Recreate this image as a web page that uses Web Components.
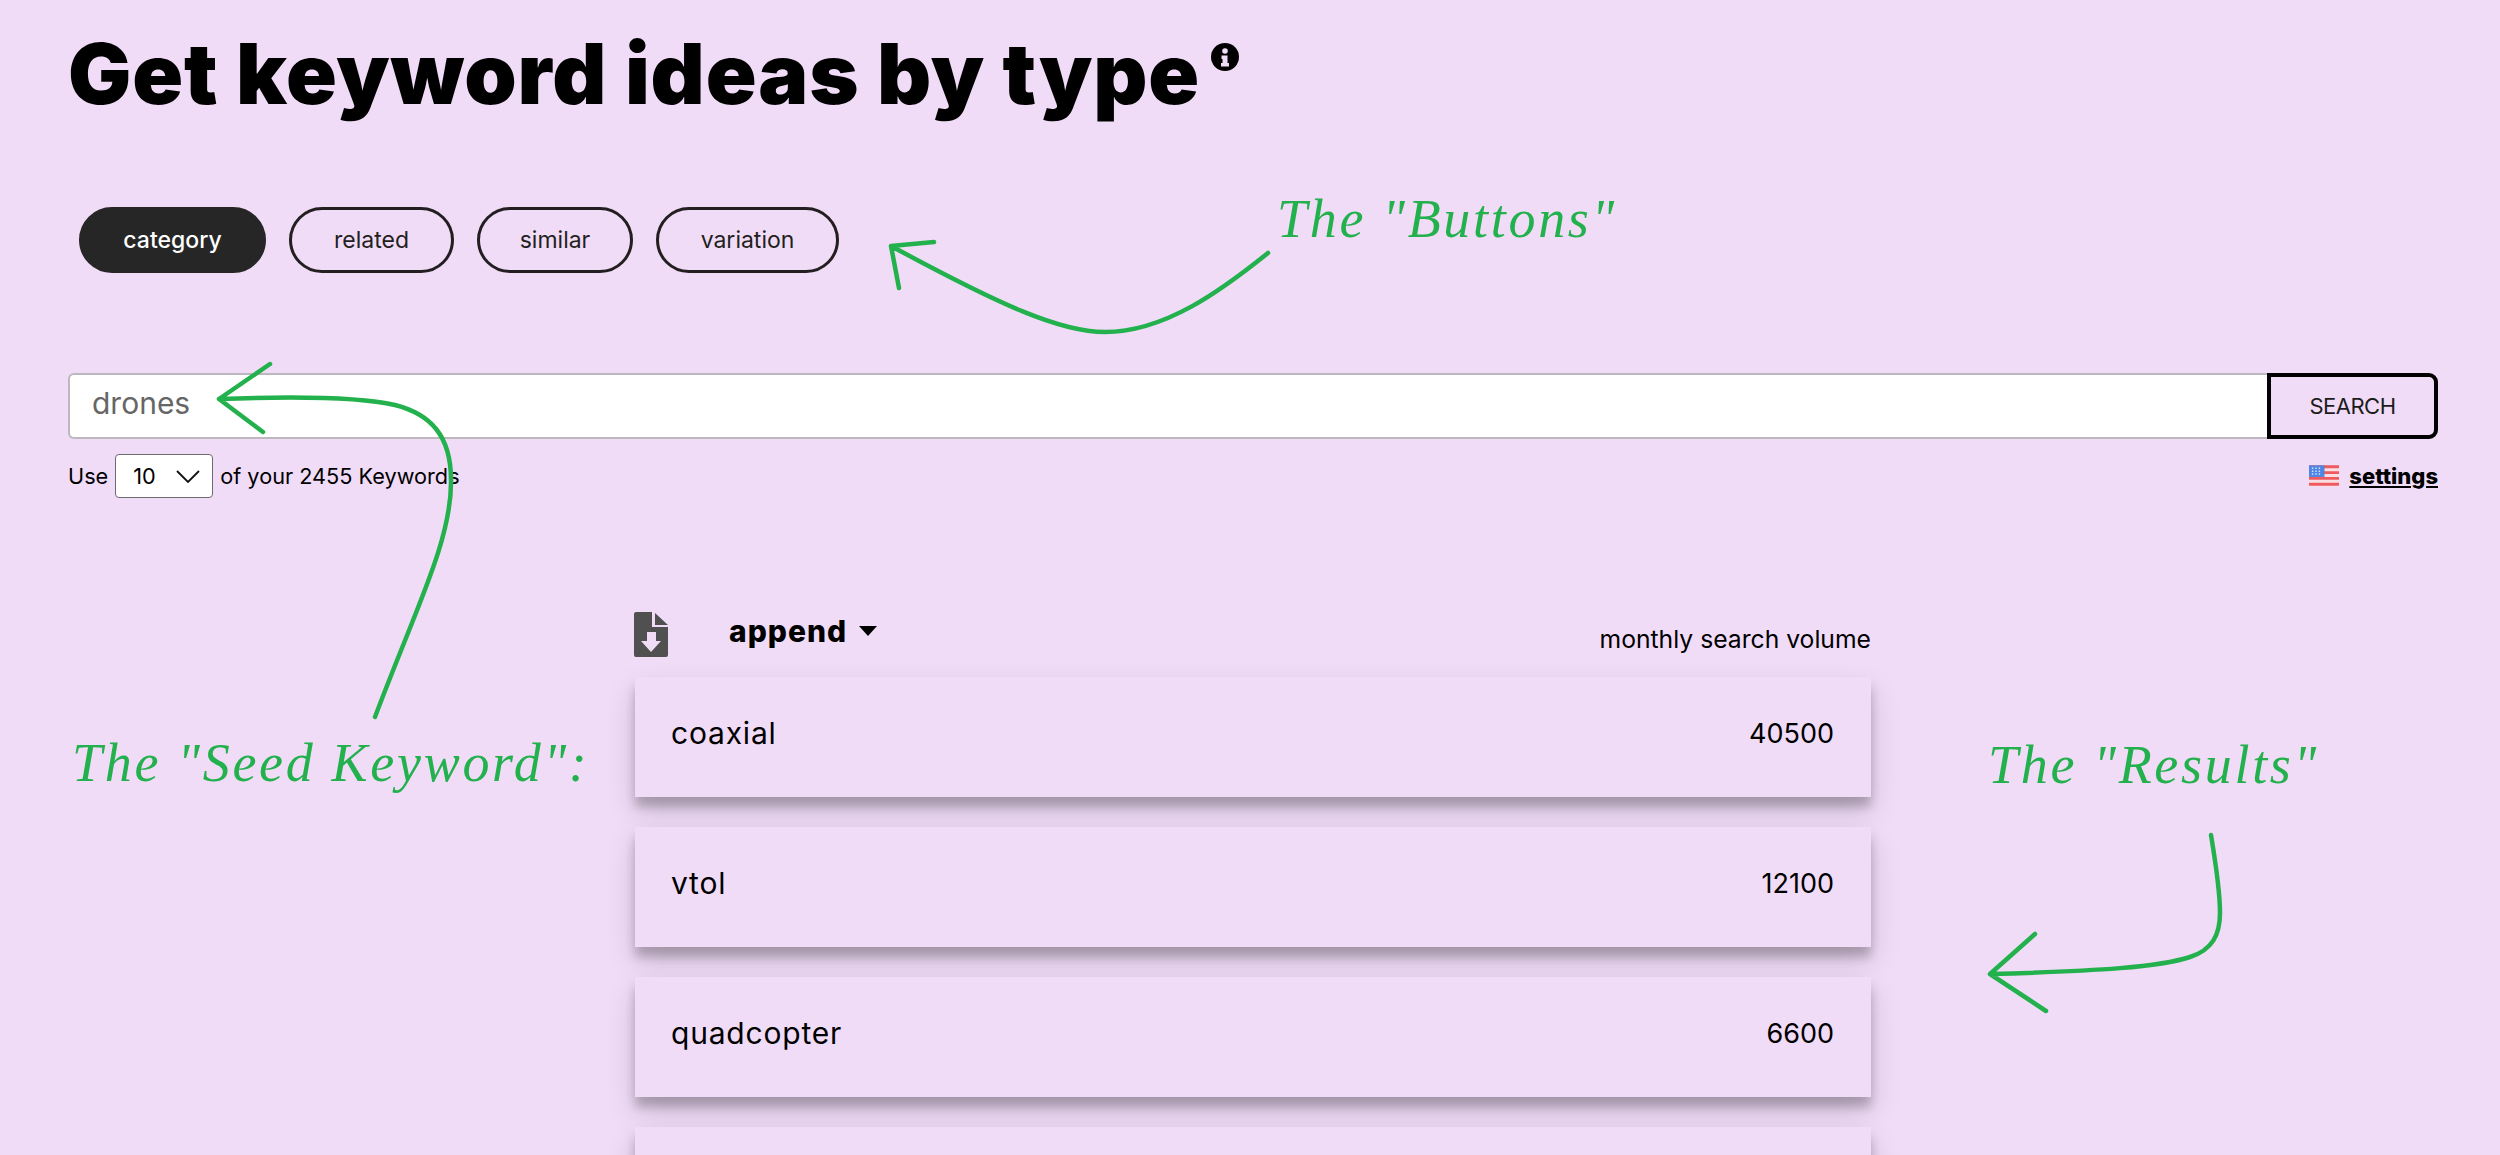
<!DOCTYPE html>
<html>
<head>
<meta charset="utf-8">
<title>Get keyword ideas by type</title>
<style>
  html, body { margin: 0; height: 100%; overflow: hidden; }
  body { background: #f1dcf8; color: #000; font-family: "Inter", "Liberation Sans", sans-serif; position: relative; }
  .page { display: flex; flex-direction: column; padding: 0 62px 0 68px; }
</style>
</head>
<body>
<div class="page">
  <page-title>Get keyword ideas by type</page-title>
  <type-buttons></type-buttons>
  <seed-search value="drones"></seed-search>
  <search-options></search-options>
  <result-list>
    <result-row keyword="coaxial" volume="40500"></result-row>
    <result-row keyword="vtol" volume="12100"></result-row>
    <result-row keyword="quadcopter" volume="6600"></result-row>
    <result-row></result-row>
  </result-list>
</div>
<hand-notes></hand-notes>

<script>
class PageTitle extends HTMLElement {
    connectedCallback(){
        this.attachShadow({mode : 'open'});
        this.shadowRoot.innerHTML = `
        <style>
            :host { display:block; height:190px; padding-top:24px; box-sizing:border-box; }
            h1 { display:inline-flex; align-items:flex-start; margin:0; font:900 84px/1.2 "Inter", sans-serif; letter-spacing:.85px; white-space:nowrap; }
            svg { width:28px; height:28px; margin:19px 0 0 11px; }
        </style>
        <h1><slot></slot><svg viewBox="0 0 28 28"><circle cx="14" cy="14" r="14" fill="#000"/><circle cx="14" cy="8" r="2.800" fill="#f1dcf8"/><path d="M10.500 12.500h6v7.500h1.500v3.500h-8V20h1.500v-4h-1z" fill="#f1dcf8"/></svg></h1>
        `
    }
}
customElements.define("page-title", PageTitle);

class TypeButtons extends HTMLElement {
    connectedCallback(){
        let names=['category','related','similar','variation'];
        this.attachShadow({mode : 'open'});
        this.shadowRoot.innerHTML = `
        <style>
            :host { display:flex; gap:23px; padding:17px 0 0 11px; height:183px; box-sizing:border-box; }
            button { height:66px; padding:0; border:3.500px solid #231f20; border-radius:33px; background:transparent; color:#231f20; font:400 23px "Inter", sans-serif; box-sizing:border-box; }
            .on { background:#262626; border-color:#262626; color:#fff; font-weight:500; }
        </style>
        ${names.map((n,i)=>`<button class="${i==0?'on':''}" style="width:${[187,165,156,183][i]}px">${n}</button>`).join('')}
        `
    }
}
customElements.define("type-buttons", TypeButtons);

class SeedSearch extends HTMLElement {
    connectedCallback(){
        let value=this.getAttribute('value') ?? '';
        this.attachShadow({mode : 'open'});
        this.shadowRoot.innerHTML = `
        <style>
            :host { display:flex; height:66px; }
            .field { flex:1; display:flex; align-items:center; padding:0 0 6px 22px; background:#fff; border:2px solid #bdb7bf; border-right:0; border-radius:6px 0 0 6px; color:#666; font-size:30px; box-sizing:border-box; }
            button { width:171px; padding:0; border:4px solid #000; border-radius:0 9px 9px 0; background:transparent; color:#1c1c1c; font:400 22px "Inter", sans-serif; letter-spacing:-.5px; box-sizing:border-box; }
        </style>
        <div class="field">${value}</div>
        <button>SEARCH</button>
        `
    }
}
customElements.define("seed-search", SeedSearch);

class SearchOptions extends HTMLElement {
    connectedCallback(){
        this.attachShadow({mode : 'open'});
        this.shadowRoot.innerHTML = `
        <style>
            :host { display:flex; align-items:flex-start; height:173px; padding-top:15px; box-sizing:border-box; font-size:21.700px; }
            .use { display:flex; align-items:center; gap:7px; flex:1; }
            .pick { display:flex; align-items:center; justify-content:space-between; width:98px; height:44px; padding:0 12px 0 17px; background:#fff; border:1.500px solid #6e6a70; border-radius:4px; box-sizing:border-box; }
            .set { display:flex; align-items:center; gap:10px; padding-top:9px; }
            a { color:#000; font-weight:800; font-size:22px; line-height:26px; text-decoration:underline; }
            svg { display:block; }
        </style>
        <div class="use">
            <span>Use</span>
            <span class="pick">10<svg width="24" height="13" viewBox="0 0 24 13"><path d="M1 1l11 11L23 1" fill="none" stroke="#111" stroke-width="1.800"/></svg></span>
            <span>of your 2455 Keywords</span>
        </div>
        <div class="set">
            <svg width="30" height="22" viewBox="0 0 31 22" style="filter:blur(.5px)"><rect width="31" height="22" fill="#f9dfe4"/><path d="M0 1.500h31M0 7.500h31M0 13.500h31M0 19.500h31" stroke="#ee5a60" stroke-width="3"/><rect width="16" height="12" fill="#4f86e4"/><path d="M3 3h10M3 6h10M3 9h10" stroke="#cfe0fa" stroke-width="1.500" stroke-dasharray="1.500 2"/></svg>
            <a href="#">settings</a>
        </div>
        `
    }
}
customElements.define("search-options", SearchOptions);

class ResultList extends HTMLElement {
    connectedCallback(){
        this.attachShadow({mode : 'open'});
        this.shadowRoot.innerHTML = `
        <style>
            :host { display:block; width:1237px; margin-left:566px; }
            .head { display:flex; align-items:flex-start; height:65px; }
            .doc { display:block; width:34px; height:45px; }
            .append { display:flex; align-items:center; gap:12px; margin:1px 0 0 61px; font-weight:800; font-size:30px; line-height:36px; letter-spacing:1px; }
            .vol { margin-left:auto; align-self:flex-end; font-size:24.700px; line-height:30px; padding-bottom:23px; }
            .rows { display:flex; flex-direction:column; gap:30px; margin-left:1px; }
        </style>
        <div class="head">
            <svg class="doc" viewBox="0 0 34 45"><path d="M2 0h16v15h16v28a2 2 0 0 1-2 2H2a2 2 0 0 1-2-2V2a2 2 0 0 1 2-2zM21 1l13 12H21z" fill="#505050"/><path d="M13 20h9v9h5L17 40 7 29h6z" fill="#f1dcf8"/></svg>
            <div class="append">append <svg width="18" height="10" viewBox="0 0 18 10"><path d="M0 0h18l-9 10z"/></svg></div>
            <span class="vol">monthly search volume</span>
        </div>
        <div class="rows"><slot></slot></div>
        `
    }
}
customElements.define("result-list", ResultList);

class ResultRow extends HTMLElement {
    connectedCallback(){
        let keyword=this.getAttribute('keyword') ?? '';
        let volume=this.getAttribute('volume') ?? '';
        this.attachShadow({mode : 'open'});
        this.shadowRoot.innerHTML = `
        <style>
            :host { display:flex; align-items:center; justify-content:space-between; height:120px; padding:0 37px 8px 36px; background:#f0dcf7; font-size:30px; box-sizing:border-box; box-shadow:0 14px 28px rgba(0,0,0,.15), 0 10px 10px rgba(0,0,0,.22); }
            .key { letter-spacing:.8px; }
            .num { font-size:27px; }
        </style>
        <span class="key">${keyword}</span><span class="num">${volume}</span>
        `
    }
}
customElements.define("result-row", ResultRow);

class HandNotes extends HTMLElement {
    connectedCallback(){
        this.attachShadow({mode : 'open'});
        this.shadowRoot.innerHTML = `
        <style>
            :host { position:absolute; left:0; top:0; width:2500px; height:1155px; pointer-events:none; color:#22b14c; font:italic 400 54px "Liberation Serif", serif; letter-spacing:2.7px; }
            svg { position:absolute; left:0; top:0; }
            span { position:absolute; white-space:nowrap; line-height:60px; }
        </style>
        <svg width="2500" height="1155" fill="none" stroke="#22b14c" stroke-width="4.500" stroke-linecap="round" stroke-linejoin="round">
            <path d="M1268 253C1222 290 1165 332 1105 332C1060 332 1000 305 891 246M891 246L934 242M891 246L899 288"/>
            <path d="M219 399C300 396 360 397 395 405C430 414 451 435 451 480C452 540 415 610 375 717M219 399L270 364M219 399L263 432"/>
            <path d="M2211 835C2216 865 2220 890 2220 913C2220 935 2212 950 2190 957C2160 967 2100 971 1990 974M1990 974L2035 934M1990 974L2046 1011"/>
        </svg>
        <span style="left:1277px;top:189px">The "Buttons"</span>
        <span style="left:72px;top:733px">The "Seed Keyword":</span>
        <span style="left:1988px;top:735px">The "Results"</span>
        `
    }
}
customElements.define("hand-notes", HandNotes);
</script>
</body>
</html>
